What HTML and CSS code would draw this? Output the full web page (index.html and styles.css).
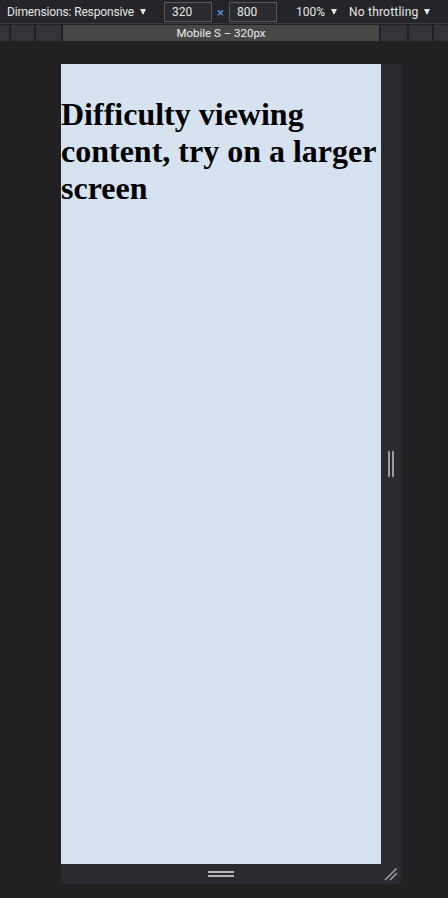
FILE: index.html
```html
<!DOCTYPE html>
<html>
<head>
<meta charset="utf-8">
<link rel="stylesheet" href="styles.css">
</head>
<body>
<div class="toolbar">
  <div class="dims"><span class="dimlabel">Dimensions: Responsive</span><i class="caret"></i></div>
  <div class="field">320</div>
  <div class="times">×</div>
  <div class="field">800</div>
  <div class="zoom"><span>100%</span><i class="caret"></i></div>
  <div class="throttle"><span>No throttling</span><i class="caret"></i></div>
</div>
<div class="ruler">
  <div class="seg w9"></div>
  <div class="seg w23"></div>
  <div class="seg w25"></div>
  <div class="seg main">Mobile S – 320px</div>
  <div class="seg w26"></div>
  <div class="seg w23"></div>
  <div class="seg rest"></div>
</div>
<div class="stage">
  <div class="frame">
    <div class="viewport">
      <h1>Difficulty viewing content, try on a larger screen</h1>
    </div>
    <div class="side"><span class="vbar"></span><span class="vbar"></span></div>
    <div class="bottom"><span class="hbar"></span><span class="hbar"></span></div>
    <div class="corner">
      <svg width="20" height="20" viewBox="0 0 20 20">
        <path d="M4 16 L15.5 4.5 M9 16 L16 9" stroke="#9c9c9c" stroke-width="1.6" fill="none"/>
      </svg>
    </div>
  </div>
</div>
</body>
</html>
```
FILE: styles.css
```css
html, body {
  margin: 0;
  padding: 0;
  background: #212123;
  width: 448px;
  height: 898px;
  overflow: hidden;
}
.toolbar {
  height: 23px;
  background: #252529;
  border-bottom: 1px solid #3c3c40;
  display: flex;
  align-items: center;
  font-family: Roboto, "Noto Sans", sans-serif;
  font-size: 12px;
  color: #e6e6e6;
}
.caret {
  display: inline-block;
  width: 0;
  height: 0;
  border-left: 3.5px solid transparent;
  border-right: 3.5px solid transparent;
  border-top: 6px solid #e6e6e6;
  margin-left: 6px;
  vertical-align: 1px;
}
.dims {
  width: 157px;
  padding-left: 7px;
  box-sizing: content-box;
  white-space: nowrap;
}
.dimlabel {
  letter-spacing: -0.15px;
}
.field {
  width: 48px;
  height: 20px;
  box-sizing: border-box;
  border: 1px solid #58585c;
  background: #2b2b2f;
  padding-left: 7px;
  line-height: 18px;
}
.times {
  width: 17px;
  text-align: center;
  color: #5aa0e0;
  font-size: 13px;
  line-height: 18px;
  padding-top: 2px;
}
.zoom {
  margin-left: 19px;
  white-space: nowrap;
}
.throttle {
  margin-left: 12px;
  white-space: nowrap;
  letter-spacing: 0.2px;
}
.ruler {
  display: flex;
  column-gap: 2px;
  padding-top: 1px;
  height: 16px;
}
.seg {
  height: 16px;
  background: #33353a;
  flex: none;
}
.w9 { width: 9px; }
.w23 { width: 23px; }
.w25 { width: 25px; }
.w26 { width: 26px; }
.rest { flex: 1; }
.main {
  width: 316px;
  background: #474747;
  color: #ececec;
  font-family: Roboto, "Noto Sans", sans-serif;
  font-size: 11.5px;
  line-height: 16px;
  text-align: center;
}
.stage {
  padding-top: 23px;
  padding-left: 61px;
}
.frame {
  display: grid;
  grid-template-columns: 320px 20px;
  grid-template-rows: 800px 20px;
  width: 340px;
  background: #2a2b30;
}
.viewport {
  background: #d6e2f0;
  padding-top: 31.5px;
  box-sizing: border-box;
  overflow: hidden;
}
.viewport h1 {
  margin: 0;
  font-family: "Liberation Serif", "Times New Roman", serif;
  font-size: 32px;
  font-weight: bold;
  color: #000;
  line-height: normal;
}
.side {
  display: flex;
  justify-content: center;
  align-items: center;
  gap: 2px;
  padding-right: 1px;
}
.vbar {
  width: 2px;
  height: 26px;
  background: #9d9d9d;
}
.bottom {
  display: flex;
  flex-direction: column;
  justify-content: center;
  align-items: center;
  gap: 2px;
}
.hbar {
  width: 26px;
  height: 2px;
  background: #b4b4b4;
}
.corner {
  display: flex;
}
```
